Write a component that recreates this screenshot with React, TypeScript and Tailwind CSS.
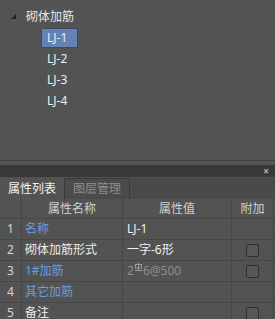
import React from 'react'

const font = { fontFamily: '"Noto Sans", "Noto Sans CJK SC", sans-serif' }

function Rebar() {
  return (
    <svg width="7" height="8" viewBox="0 0 7 8" className="inline-block relative -top-[4px] mx-[1px]">
      <rect x="0.5" y="1.5" width="6" height="3.5" fill="none" stroke="#9a9a9a" strokeWidth="1" />
      <line x1="3.5" y1="0" x2="3.5" y2="7" stroke="#9a9a9a" strokeWidth="1" />
      <line x1="0" y1="7.5" x2="7" y2="7.5" stroke="#9a9a9a" strokeWidth="1" />
    </svg>
  )
}

function Check() {
  return <div className="w-[13px] h-[13px] rounded-[2px] border border-[#2f2f2f] bg-[#575757]"></div>
}

const rows = [
  { n: '1', name: '名称', blue: true, value: 'LJ-1', check: false },
  { n: '2', name: '砌体加筋形式', blue: false, value: '一字-6形', check: true },
  { n: '3', name: '1#加筋', blue: true, value: 'rebar', check: true },
  { n: '4', name: '其它加筋', blue: true, value: '', check: false },
  { n: '5', name: '备注', blue: false, value: '', check: true },
]

export default function App() {
  return (
    <div className="w-[275px] h-[319px] overflow-hidden bg-[#535353] text-[12px]" style={font}>
      {/* tree */}
      <div className="h-[160px] pt-[6px] flex flex-col">
        <div className="h-[21px] flex items-center">
          <svg width="6" height="6" viewBox="0 0 6 6" className="ml-[11px] mt-[1px]">
            <polygon points="5,0 5,5 0,5" fill="#242424" />
          </svg>
          <span className="ml-[9px] text-[#e6e6e6]">砌体加筋</span>
        </div>
        <div className="h-[21px] flex items-center">
          <div className="ml-[41px] w-[37px] h-[20px] bg-[#6482b4] border border-[#3f4a5c] flex items-center pl-[5px] text-[#f0f0f0]">
            LJ-1
          </div>
        </div>
        {['LJ-2', 'LJ-3', 'LJ-4'].map(t => (
          <div key={t} className="h-[21px] flex items-center pl-[47px] text-[#f0f0f0]">{t}</div>
        ))}
      </div>
      <div className="h-px bg-[#404040]"></div>
      <div className="h-[4px]"></div>

      {/* panel title bar */}
      <div className="h-[12px] bg-[#383838] flex items-center justify-end pr-[6px]">
        <span className="text-[#b5b5b5] text-[10px] leading-none font-bold">×</span>
      </div>
      <div className="h-px"></div>

      {/* tabs */}
      <div className="h-[21px] flex bg-[#4a4a4a]">
        <div className="w-[64px] bg-[#535353] flex items-center justify-center text-[12px] text-[#f2f2f2]">属性列表</div>
        <div className="w-px bg-[#393939]"></div>
        <div className="w-[65px] bg-[#4b4b4b] border-t border-r border-[#393939] flex items-center justify-center text-[12px] text-[#8e8e8e]">图层管理</div>
      </div>

      {/* table */}
      <div>
        <div className="h-[20px] flex border-b border-[#474747] text-[#d0d0d0]">
          <div className="w-[22px] border-r border-[#474747]"></div>
          <div className="w-[101px] border-r border-[#474747] flex items-center justify-center">属性名称</div>
          <div className="w-[109px] border-r border-[#474747] flex items-center justify-center">属性值</div>
          <div className="w-[42px] border-r border-[#474747] flex items-center justify-center">附加</div>
        </div>
        {rows.map(r => (
          <div key={r.n} className="h-[21px] flex border-b border-[#474747]">
            <div className="w-[22px] border-r border-[#474747] flex items-center justify-center text-[#d4d4d4]">{r.n}</div>
            <div className={`w-[101px] border-r border-[#474747] flex items-center pl-[3px] ${r.blue ? 'text-[#6c9ae0]' : 'text-[#ececec]'}`}>{r.name}</div>
            <div className="w-[109px] border-r border-[#474747] flex items-center pl-[4px] text-[#f0f0f0]">
              {r.value === 'rebar' ? (
                <span className="text-[#8e8e8e] flex items-center">2<Rebar />6@500</span>
              ) : r.value}
            </div>
            <div className="w-[42px] border-r border-[#474747] flex items-center justify-center">
              {r.check && <Check />}
            </div>
          </div>
        ))}
      </div>
    </div>
  )
}
